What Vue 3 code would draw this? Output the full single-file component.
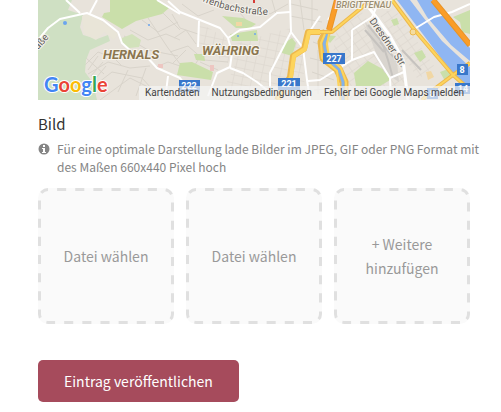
<script setup>
import { ref } from 'vue'

const uploads = ref(['Datei wählen', 'Datei wählen'])

function addUpload() {
  uploads.value.push('Datei wählen')
}
</script>

<template>
  <form class="entry" @submit.prevent>
    <div class="map">
      <svg class="map-art" viewBox="0 0 432 100" preserveAspectRatio="xMidYMax slice" role="img" aria-label="Karte">
        <defs>
          <pattern id="blocks" width="9" height="8" patternUnits="userSpaceOnUse" patternTransform="rotate(12)">
            <path d="M0 0H9M0 0V8" class="minor" />
          </pattern>
          <pattern id="slant" width="9" height="7" patternUnits="userSpaceOnUse" patternTransform="rotate(-35)">
            <path d="M0 0H9M0 0V7" class="minor" />
          </pattern>
        </defs>
        <rect width="432" height="100" fill="#e8e3db" />
        <path d="M195 44L252 28L264 50L268 100H180L196 68ZM160 22L188 38L192 64L160 48Z" fill="url(#blocks)" />
        <path d="M298 32L324 12L350 50L366 72V100H310L294 60ZM340 12L358 10L396 66L380 80Z" fill="url(#slant)" />
        <g class="minor">
          <path d="M46 66L60 52L76 58L84 66M50 74L70 62L92 68L112 66M56 86L74 72L104 78L122 98M62 100L92 78L128 96M80 92L90 70M98 96L108 68M48 58L66 74M50 70L60 56M53 76L65 62M58 78L68 66" />
          <path d="M92 30L110 40L128 34L142 40M86 36L110 50L140 56M104 20L120 32L140 22M110 18L130 48L142 64M122 10L142 30M118 67L130 62L142 66" />
          <path d="M134 14L142 28L160 34M136 38L148 30L158 44M132 52L150 46L166 60L190 62M134 64L148 50M162 62L180 70M150 76L160 60M144 4L160 16L176 10M196 6L208 20M222 6L232 14L250 4M234 0L238 14" />
          <path d="M253 4L280 10M252 16L284 22M262 0L266 30M274 0L274 30M275 42L286 46M272 58L288 62M274 72L296 80M276 90L302 88M280 50L280 94" />
        </g>
        <g fill="#cadfaa">
          <path d="M0 0H34L30 10L45 15L42 27L45 35L59 39L70 35L72 41L52 50L48 60L47 72L55 83L59 100H0Z" fill="#cfe0c3" />
          <path d="M72 0H119L131 8L124 14L98 21L84 29L64 17L66 13L72 12Z" />
          <path d="M84 38L94 34L103 40L101 47L91 48L84 44Z" fill="#d2e2bb" />
          <path d="M184 16L205 18L218 24L212 28H198Z" />
          <path d="M192 34L219 30L220 41H194Z" />
          <path d="M245 44L254 38L258 43L254 56L244 53Z" />
          <path d="M142 63L154 62L175 72L173 80L139 75ZM156 54L166 54L167 61L158 60Z" />
          <path d="M316 73L330 61L350 72L352 80L342 86H318Z" />
          <path d="M376 53L384 50L388 57L382 62ZM402 72L410 69L417 76L407 81ZM286 35L298 36L292 43ZM353 20L359 18L361 24L356 26Z" />
          <path d="M415 17L432 10V34L424 32L422 22Z" />
        </g>
        <path d="M44 16L54 14L80 34L76 40L66 32L58 40L46 34Z" fill="#e9e5d8" />
        <path d="M326 20L340 38L359 62L361 82L346 72L336 48Z" fill="#d9d5cf" />
        <path d="M330 25L344 42L350 60L355 78M327 30L346 52M342 42L362 64M364 50L383 70" fill="none" stroke="#c6c3bf" stroke-width="2" />
        <g fill="#8fb6f2">
          <path d="M359 0H372L385 17L404 41L432 67V92L415 74Z" />
          <path d="M379 0H394L432 48V61L413 45L389 17Z" />
        </g>
        <circle cx="27" cy="23" r="2" fill="#6ba4ee" /><circle cx="111" cy="25" r="1" fill="#6ba4ee" />
        <circle cx="200" cy="36" r="1" fill="#6ba4ee" /><circle cx="217" cy="34" r="1" fill="#6ba4ee" />
        <path d="M120 64h5v4h-5zM172 65h4v6h-4z" fill="#edc6c1" />
        <path d="M198 22h6v4h-6zM388 72l5 -1l3 6l-6 3z" fill="#f1d7a4" />
        <g class="street">
          <path d="M0 40L10 28L22 19L49 13L65 20L80 32L84 43L95 53L109 57L119 68L142 78L150 88M28 0L42 13M52 13L59 0M119 0L142 14M130 76L127 100" />
          <path d="M130 1L142 12L162 20L182 28L190 38L194 53L192 67L179 73L170 96M190 38L202 30L222 27L239 13L252 12M161 21L160 47M192 68L205 73L219 82L235 95" />
          <path d="M252 0L253 32L232 73V87M253 32L265 48L269 80L272 100M270 81L282 80L314 60L336 52L352 78L353 100" />
          <path d="M290 20L300 4L306 0M314 30L334 17L338 8M314 30L314 60M352 78L366 72M282 16L270 34M378 28L396 17L414 12L432 4" />
          <path d="M328 4L339 18L352 36L365 60L370 100" stroke-width="3" />
        </g>
        <g class="road-edge">
          <path d="M289 31L284 42L286 58L300 69L306 82L306 100" stroke-width="9" />
        </g>
        <path d="M289 34L286 44L289 58L301 70L305 82V100" fill="none" stroke="#83b3e8" stroke-width="3" />
        <g class="road-edge">
          <path d="M282 32H270L266 49L255 56L252 77L239 100" stroke-width="6" />
          <path d="M282 32H294L333 0M354 0L375 28L415 75L432 90M384 100L395 90L415 75L432 63" stroke-width="4" />
        </g>
        <g class="road">
          <path d="M282 32H271L267 49L256 56L253 77L240 100" stroke-width="4" />
          <path d="M282 32H294L333 0M354 0L375 28L415 75L432 90M384 100L395 90L415 75L432 63M287 34L283 43L284 58L299 71L302 100M291 34L289 44L291 57L303 68L308 82V100" stroke-width="2" />
        </g>
        <circle cx="375" cy="32" r="3" fill="#f4dca0" stroke="#edb84d" />
        <path d="M299 0L291 30M395 0L432 45" fill="none" stroke="#e89427" stroke-width="6" />
        <path d="M299 0L291 30M395 0L432 45" fill="none" stroke="#fa9d29" stroke-width="4" />
        <path d="M215 0h2v3h-2z" fill="#d63c36" />
        <g class="shield">
          <rect x="141" y="80" width="21" height="12" /><rect x="240" y="78" width="22" height="12" />
          <rect x="285" y="53" width="22" height="11" /><rect x="419" y="64" width="11" height="11" />
          <rect x="417" y="83" width="15" height="11" /><rect x="389" y="88" width="11" height="11" />
        </g>
        <g class="shield-text">
          <text x="151" y="89">222</text><text x="251" y="87">221</text><text x="296" y="62">227</text>
          <text x="424" y="73">8</text><text x="425" y="92">14</text><text x="394" y="97">8</text>
        </g>
        <g class="district">
          <text x="65" y="59">HERNALS</text>
          <text x="164" y="55">WÄHRING</text>
          <text x="298" y="8" class="small">BRIGITTENAU</text>
        </g>
        <g class="street-name">
          <path id="bach" d="M164 1Q194 15 236 15" fill="none" stroke="none" />
          <path id="dresd" d="M331 21Q346 42 366 72" fill="none" stroke="none" />
          <text><textPath href="#bach">ffenbachstraße</textPath></text>
          <text><textPath href="#dresd">Dresdner Str.</textPath></text>
          <text x="0" y="50" transform="rotate(-48 0 50)">aße</text>
        </g>
        <text class="logo" x="6" y="92"><tspan fill="#4285f4">G</tspan><tspan fill="#ea4335">o</tspan><tspan fill="#fbbc05">o</tspan><tspan fill="#4285f4">g</tspan><tspan fill="#34a853">l</tspan><tspan fill="#ea4335">e</tspan></text>
      </svg>
      <nav class="credits">
        <a href="#kartendaten">Kartendaten</a>
        <a href="#nutzung">Nutzungsbedingungen</a>
        <a href="#fehler">Fehler bei Google Maps melden</a>
      </nav>
    </div>

    <h2 class="title">Bild</h2>
    <p class="hint">
      <svg class="info" viewBox="0 0 12 12" aria-hidden="true">
        <circle cx="6" cy="6" r="5.5" fill="#858585" />
        <path d="M5 2h2v2H5zM4 5h3v4h1v1H4V9h1V6H4z" fill="#fff" />
      </svg>
      <span>Für eine optimale Darstellung lade Bilder im JPEG, GIF oder PNG Format mit des Maßen 660x440 Pixel hoch</span>
    </p>

    <div class="uploads">
      <button v-for="(label, i) in uploads" :key="i" type="button" class="tile">
        <svg class="dashes" aria-hidden="true"><rect width="100%" height="100%" rx="10" pathLength="522" /></svg>
        {{ label }}
      </button>
      <button type="button" class="tile" @click="addUpload">
        <svg class="dashes" aria-hidden="true"><rect width="100%" height="100%" rx="10" pathLength="522" /></svg>
        + Weitere hinzufügen
      </button>
    </div>

    <button type="submit" class="submit">Eintrag veröffentlichen</button>
  </form>
</template>

<style>
body {
  background: #fff;
}
</style>

<style scoped>
.entry {
  padding: 0 31px 10px 38px;
  font-family: "Noto Sans CJK SC", "Open Sans", sans-serif;
}

.map {
  position: relative;
  height: 100px;
  overflow: hidden;
}

.map-art {
  display: block;
  width: 100%;
  height: 100%;
}

.minor {
  fill: none;
  stroke: #d9d4cb;
  stroke-width: 1;
}

.street {
  fill: none;
  stroke: #fff;
  stroke-width: 2;
  stroke-linejoin: round;
}

.road-edge {
  fill: none;
  stroke: #edb84d;
  stroke-linejoin: round;
}

.road {
  fill: none;
  stroke: #fdd45c;
  stroke-linejoin: round;
}

.shield {
  fill: #3877cb;
}

.shield-text {
  font: bold 9px Roboto, sans-serif;
  fill: #fff;
  text-anchor: middle;
}

.district {
  font: italic bold 13px Roboto, sans-serif;
  fill: #8b7650;
  stroke: #f7f4ec;
  stroke-width: 2px;
  paint-order: stroke;
}

.district .small {
  font-size: 9px;
  font-weight: 500;
  fill: #9b8d70;
}

.street-name {
  font: 10px Roboto, sans-serif;
  fill: #5d5b57;
  stroke: #f4f1eb;
  stroke-width: 2px;
  paint-order: stroke;
}

.logo {
  font: bold 20px Lato, sans-serif;
  stroke: #fff;
  stroke-width: 2px;
  paint-order: stroke;
}

.credits {
  position: absolute;
  right: 0;
  bottom: 0;
  display: flex;
  gap: 12px;
  padding: 0 6px;
  background: rgba(245, 245, 245, 0.7);
  font: 10px/14px Roboto, sans-serif;
  white-space: nowrap;
}

.credits a {
  color: #444;
  text-decoration: none;
}

.title {
  margin: 12px 0 4px;
  color: #333;
  font-size: 15px;
  font-weight: 400;
  line-height: 24px;
}

.hint {
  display: flex;
  gap: 7px;
  margin: 0 -16px 12px 0;
  color: #858585;
  font-size: 12px;
  line-height: 18px;
}

.info {
  flex: none;
  width: 12px;
  height: 12px;
  margin-top: 3px;
}

.uploads {
  display: grid;
  grid-template-columns: repeat(3, 1fr);
  gap: 12px;
}

.tile {
  position: relative;
  aspect-ratio: 1;
  padding: 0 24px;
  overflow: hidden;
  border: 0;
  border-radius: 10px;
  background: #fafafa;
  color: #999;
  font: inherit;
  font-size: 14px;
  line-height: 24px;
  cursor: pointer;
}

.dashes {
  position: absolute;
  inset: 0;
  width: 100%;
  height: 100%;
  fill: none;
  stroke: #e0e0e0;
  stroke-width: 6px;
  stroke-dasharray: 9 9;
  stroke-dashoffset: 9px;
}

.submit {
  display: block;
  margin-top: 36px;
  padding: 9px 26px;
  border: 0;
  border-radius: 5px;
  background: #a64b5c;
  color: #fff;
  font: inherit;
  font-size: 14px;
  line-height: 24px;
  cursor: pointer;
}
</style>
